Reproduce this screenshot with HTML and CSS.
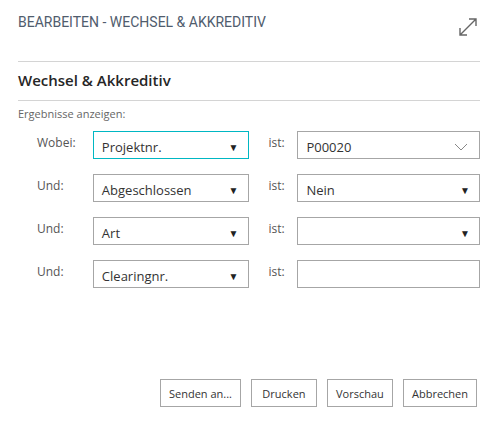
FILE: index.html
```html
<!DOCTYPE html>
<html lang="de">
<head>
    <meta charset="UTF-8">
    <title>Bearbeiten - Wechsel &amp; Akkreditiv</title>
    <link rel="stylesheet" href="styles.css">
</head>
<body>
    <div class="dialog">
        <div class="dialog-head">
            <h1 class="dialog-title">BEARBEITEN - WECHSEL &amp; AKKREDITIV</h1>
            <svg class="expand" width="22" height="22" viewBox="0 0 22 22">
                <path d="M3 19 L19 3 M12 3 H19 V10 M3 12 V19 H10" fill="none" stroke="#666" stroke-width="1.4"/>
            </svg>
        </div>

        <h2 class="section-title">Wechsel &amp; Akkreditiv</h2>
        <p class="hint">Ergebnisse anzeigen:</p>

        <div class="filters">
            <div class="filter-row">
                <span class="label">Wobei:</span>
                <div class="box field focused">Projektnr.<span class="caret">&#9660;</span></div>
                <span class="label is">ist:</span>
                <div class="box value">P00020
                    <svg class="chevron" width="14" height="8" viewBox="0 0 14 8"><path d="M1 1 L7 7 L13 1" fill="none" stroke="#888" stroke-width="1"/></svg>
                </div>
            </div>
            <div class="filter-row">
                <span class="label">Und:</span>
                <div class="box field">Abgeschlossen<span class="caret">&#9660;</span></div>
                <span class="label is">ist:</span>
                <div class="box value">Nein<span class="caret">&#9660;</span></div>
            </div>
            <div class="filter-row">
                <span class="label">Und:</span>
                <div class="box field">Art<span class="caret">&#9660;</span></div>
                <span class="label is">ist:</span>
                <div class="box value"><span class="caret">&#9660;</span></div>
            </div>
            <div class="filter-row">
                <span class="label">Und:</span>
                <div class="box field">Clearingnr.<span class="caret">&#9660;</span></div>
                <span class="label is">ist:</span>
                <div class="box value"></div>
            </div>
        </div>

        <div class="actions">
            <button class="btn">Senden an...</button>
            <button class="btn">Drucken</button>
            <button class="btn">Vorschau</button>
            <button class="btn">Abbrechen</button>
        </div>
    </div>
</body>
</html>
```

FILE: styles.css
```css
body {
    margin: 0;
    background: #fff;
    font-family: "Open Sans", "Segoe UI", sans-serif;
    color: #333;
}

.dialog {
    width: 496px;
    height: 424px;
    padding: 0 16px 0 18px;
    box-sizing: border-box;
    display: flex;
    flex-direction: column;
}

.dialog-head {
    display: flex;
    justify-content: space-between;
    align-items: flex-start;
    height: 61px;
    border-bottom: 1px solid #d4d4d4;
}

.dialog-title {
    margin: 14px 0 0;
    font-family: Roboto, sans-serif;
    font-weight: 400;
    font-size: 14px;
    color: #505c6d;
}

.expand {
    margin: 16px 1px 0 0;
}

.section-title {
    margin: 0;
    height: 38px;
    line-height: 37px;
    font-size: 15px;
    font-weight: 600;
    color: #262626;
    border-bottom: 1px solid #d4d4d4;
}

.hint {
    margin: 5px 0 0;
    font-size: 11px;
    color: #666;
}

.filters {
    margin-top: 10px;
    display: flex;
    flex-direction: column;
    gap: 15px;
}

.filter-row {
    display: flex;
    align-items: flex-start;
}

.label {
    width: 56px;
    padding: 3px 0 0 19px;
    font-size: 12px;
    color: #555;
}

.label.is {
    width: 29px;
    padding-left: 20px;
}

.box {
    height: 28px;
    box-sizing: border-box;
    border: 1px solid #a6a6a6;
    display: flex;
    align-items: center;
    justify-content: space-between;
    padding: 3px 9px 0 8px;
    font-size: 13px;
    color: #333;
}

.field {
    width: 156px;
}

.field.focused {
    border-color: #00b7c3;
}

.value {
    width: 183px;
}

.caret {
    font-size: 10px;
    color: #222;
    margin-left: auto;
}

.chevron {
    margin-right: 2px;
}

.actions {
    margin-top: auto;
    margin-bottom: 17px;
    display: flex;
    justify-content: flex-end;
    gap: 10px;
    padding-right: 3px;
}

.btn {
    height: 28px;
    min-width: 66px;
    padding: 0 8px;
    background: #fff;
    border: 1px solid #a6a6a6;
    font-family: "Open Sans", sans-serif;
    font-size: 11px;
    color: #333;
}
```
